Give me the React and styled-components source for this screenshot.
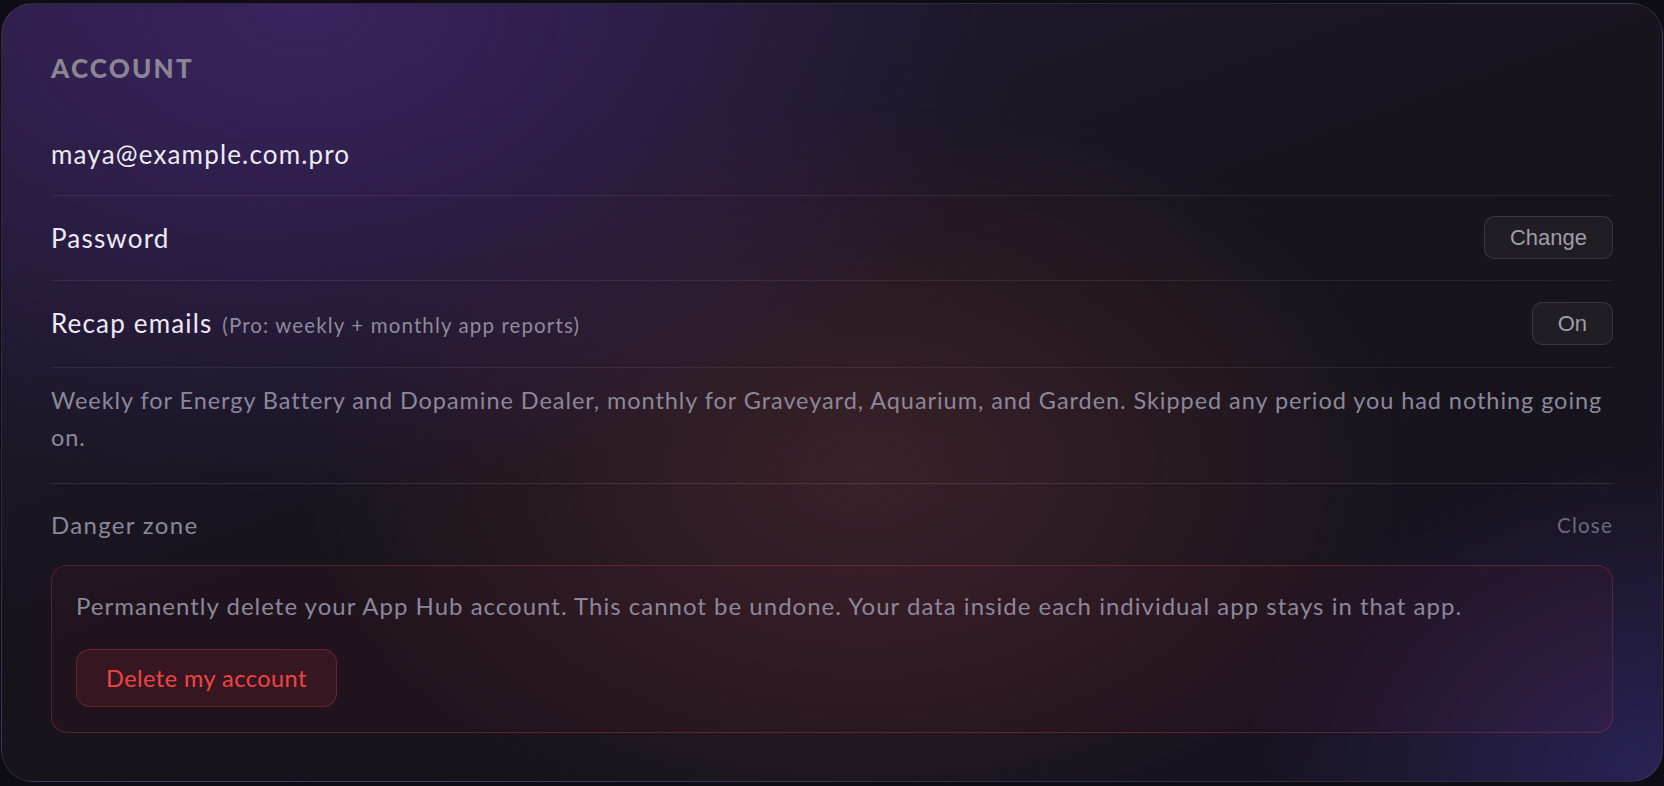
import React from 'react';
import styled, { createGlobalStyle } from 'styled-components';

const Global = createGlobalStyle`
  html, body { margin: 0; padding: 0; background: #0e0c14; }
  body { font-family: Lato, "Noto Sans", sans-serif; -webkit-font-smoothing: antialiased; }
  * { box-sizing: border-box; }
`;

const Page = styled.div`
  height: 786px;
  padding: 3px 1px 4px;
`;

const Card = styled.section`
  height: 100%;
  display: flex;
  flex-direction: column;
  padding: 49px 49px 0;
  border: 1px solid rgba(255, 255, 255, 0.1);
  border-radius: 32px;
  overflow: hidden;
  background:
    radial-gradient(ellipse 1000px 680px at 18% 0%, rgba(58, 36, 98, 0.95), rgba(58, 36, 98, 0) 72%),
    radial-gradient(ellipse 780px 520px at 52% 60%, rgba(68, 36, 44, 0.8), rgba(68, 36, 44, 0) 72%),
    radial-gradient(ellipse 580px 460px at 100% 100%, rgba(44, 36, 92, 0.9), rgba(44, 36, 92, 0) 72%),
    linear-gradient(160deg, #221a33 0%, #17141c 50%, #16131e 100%);
`;

const Heading = styled.h2`
  margin: 0 0 28px;
  font-family: Lato, sans-serif;
  font-weight: 900;
  font-size: 26px;
  line-height: 30px;
  letter-spacing: 0.085em;
  text-transform: uppercase;
  color: #8a8595;
`;

const Row = styled.div`
  display: flex;
  align-items: center;
  justify-content: space-between;
  padding: ${(p) => p.$pad};
  border-bottom: 1px solid rgba(255, 255, 255, 0.07);
`;

const Label = styled.span`
  font-size: 26px;
  line-height: 34px;
  letter-spacing: 0.045em;
  color: #eeeaf5;
`;

const Sub = styled.span`
  margin-left: 2px;
  font-size: 20.5px;
  letter-spacing: 0.055em;
  color: #8f8a9b;
`;

const GhostButton = styled.button`
  padding: 8px 25px;
  font-family: "Liberation Sans", Arial, sans-serif;
  font-size: 22px;
  line-height: 25px;
  color: #a19cab;
  background: rgba(255, 255, 255, 0.04);
  border: 1px solid rgba(255, 255, 255, 0.12);
  border-radius: 10px;
  cursor: pointer;
`;

const Description = styled.p`
  margin: 0;
  padding: 14px 0 27px;
  font-size: 23.5px;
  line-height: 37px;
  letter-spacing: 0.04em;
  color: #8c879a;
`;

const Danger = styled.div`
  border-top: 1px solid rgba(255, 255, 255, 0.1);
`;

const DangerHeader = styled.div`
  display: flex;
  align-items: center;
  justify-content: space-between;
  padding-top: 24px;
  line-height: 34px;
`;

const DangerTitle = styled.span`
  font-size: 24px;
  letter-spacing: 0.055em;
  color: #8c879a;
`;

const CloseLink = styled.button`
  padding: 0;
  background: none;
  border: 0;
  font-family: Lato, sans-serif;
  font-size: 20.5px;
  line-height: 34px;
  letter-spacing: 0.06em;
  color: #6e6979;
  cursor: pointer;
`;

const DangerBox = styled.div`
  margin-top: 23px;
  padding: 23px 24px 25px;
  border: 1px solid rgba(200, 55, 75, 0.34);
  border-radius: 16px;
  background: rgba(200, 40, 60, 0.05);
`;

const DangerText = styled.p`
  margin: 0;
  font-size: 24px;
  line-height: 34px;
  letter-spacing: 0.042em;
  color: #8c879a;
`;

const DeleteButton = styled.button`
  margin-top: 26px;
  padding: 11px 29px;
  font-family: Lato, sans-serif;
  font-size: 23.5px;
  line-height: 34px;
  letter-spacing: 0.02em;
  color: #ef4444;
  background: rgba(220, 50, 65, 0.12);
  border: 1px solid rgba(220, 60, 70, 0.32);
  border-radius: 14px;
  cursor: pointer;
`;

export default function App() {
  return (
    <>
      <Global />
      <Page>
        <Card>
          <Heading>Account</Heading>
          <Row $pad="26px 0 24px">
            <Label>maya@example.com.pro</Label>
          </Row>
          <Row $pad="20px 0 21px">
            <Label>Password</Label>
            <GhostButton>Change</GhostButton>
          </Row>
          <Row $pad="21px 0 22px">
            <Label>
              Recap emails <Sub>(Pro: weekly + monthly app reports)</Sub>
            </Label>
            <GhostButton>On</GhostButton>
          </Row>
          <Description>
            Weekly for Energy Battery and Dopamine Dealer, monthly for Graveyard, Aquarium, and Garden. Skipped
            any period you had nothing going on.
          </Description>
          <Danger>
            <DangerHeader>
              <DangerTitle>Danger zone</DangerTitle>
              <CloseLink>Close</CloseLink>
            </DangerHeader>
            <DangerBox>
              <DangerText>
                Permanently delete your App Hub account. This cannot be undone. Your data inside each individual app
                stays in that app.
              </DangerText>
              <DeleteButton>Delete my account</DeleteButton>
            </DangerBox>
          </Danger>
        </Card>
      </Page>
    </>
  );
}
